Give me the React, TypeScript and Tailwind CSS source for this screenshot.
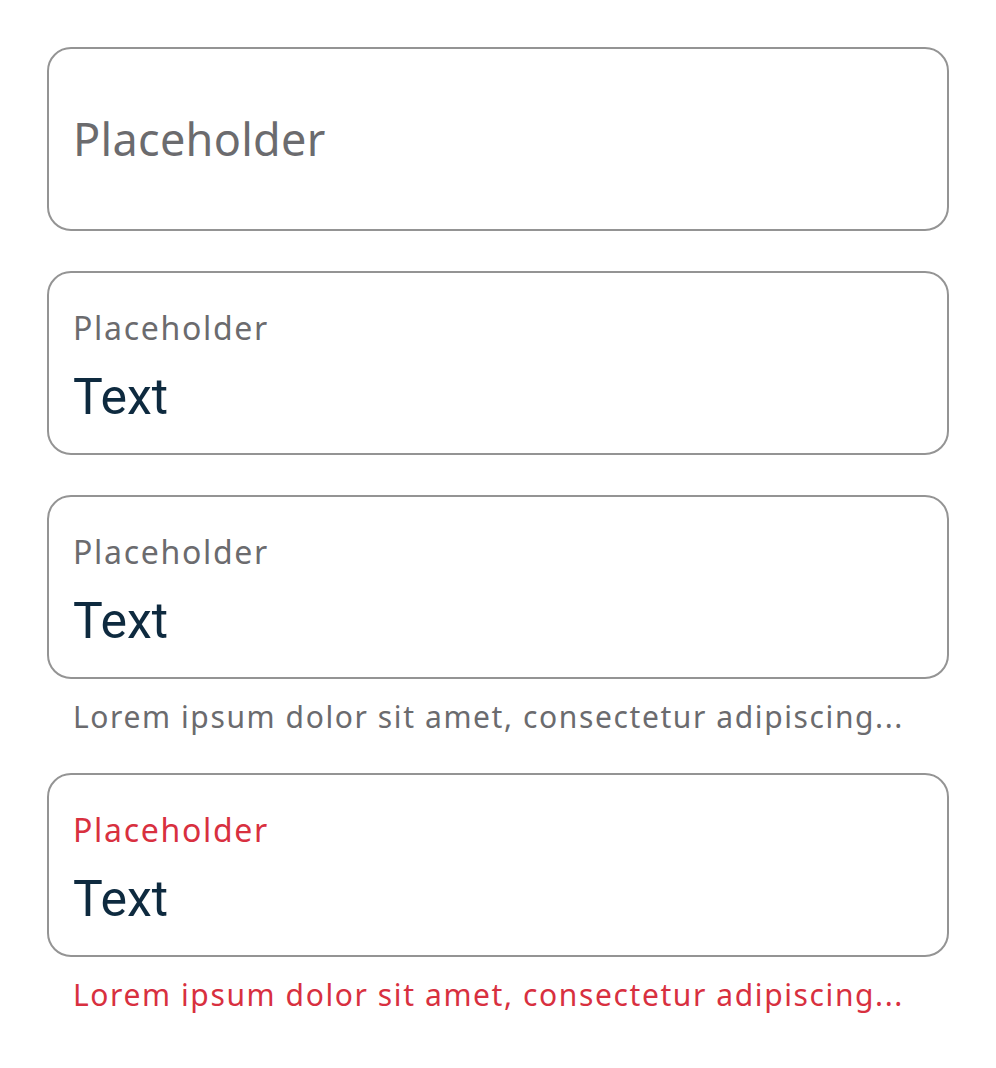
const sansFont = { fontFamily: '"Noto Sans", sans-serif' };

function Field({
  label,
  value,
  error,
  helper,
}: {
  label: string;
  value?: string;
  error?: boolean;
  helper?: string;
}) {
  const tone = error ? "text-[#d8303f]" : "text-[#6b6b6e]";
  return (
    <div className="flex flex-col">
      {value ? (
        <div className="flex h-[184px] flex-col rounded-[24px] border-2 border-[#949494] px-[24px] pt-[36px]">
          <span className={`text-[32px] leading-[38px] tracking-[1.7px] ${tone}`} style={sansFont}>
            {label}
          </span>
          <span className="mt-[22px] font-['Roboto',sans-serif] text-[50px] leading-[56px] text-[#0e2a3f]">
            {value}
          </span>
        </div>
      ) : (
        <div className="flex h-[184px] flex-col justify-center rounded-[24px] border-2 border-[#949494] px-[24px]">
          <span className="text-[45px] leading-[56px] tracking-[0.3px] text-[#6b6b6e]" style={sansFont}>
            {label}
          </span>
        </div>
      )}
      {helper && (
        <p
          className={`mt-[18px] whitespace-nowrap pl-[26px] text-[30px] leading-[40px] tracking-[1.6px] ${tone}`}
          style={sansFont}
        >
          {helper}
        </p>
      )}
    </div>
  );
}

export default function App() {
  const helper = "Lorem ipsum dolor sit amet, consectetur adipiscing...";
  return (
    <div className="min-h-screen bg-white">
      <main className="flex w-[949px] flex-col pl-[47px] pt-[47px]">
        <Field label="Placeholder" />
        <div className="mt-[40px]">
          <Field label="Placeholder" value="Text" />
        </div>
        <div className="mt-[40px]">
          <Field label="Placeholder" value="Text" helper={helper} />
        </div>
        <div className="mt-[36px]">
          <Field label="Placeholder" value="Text" helper={helper} error />
        </div>
      </main>
    </div>
  );
}
